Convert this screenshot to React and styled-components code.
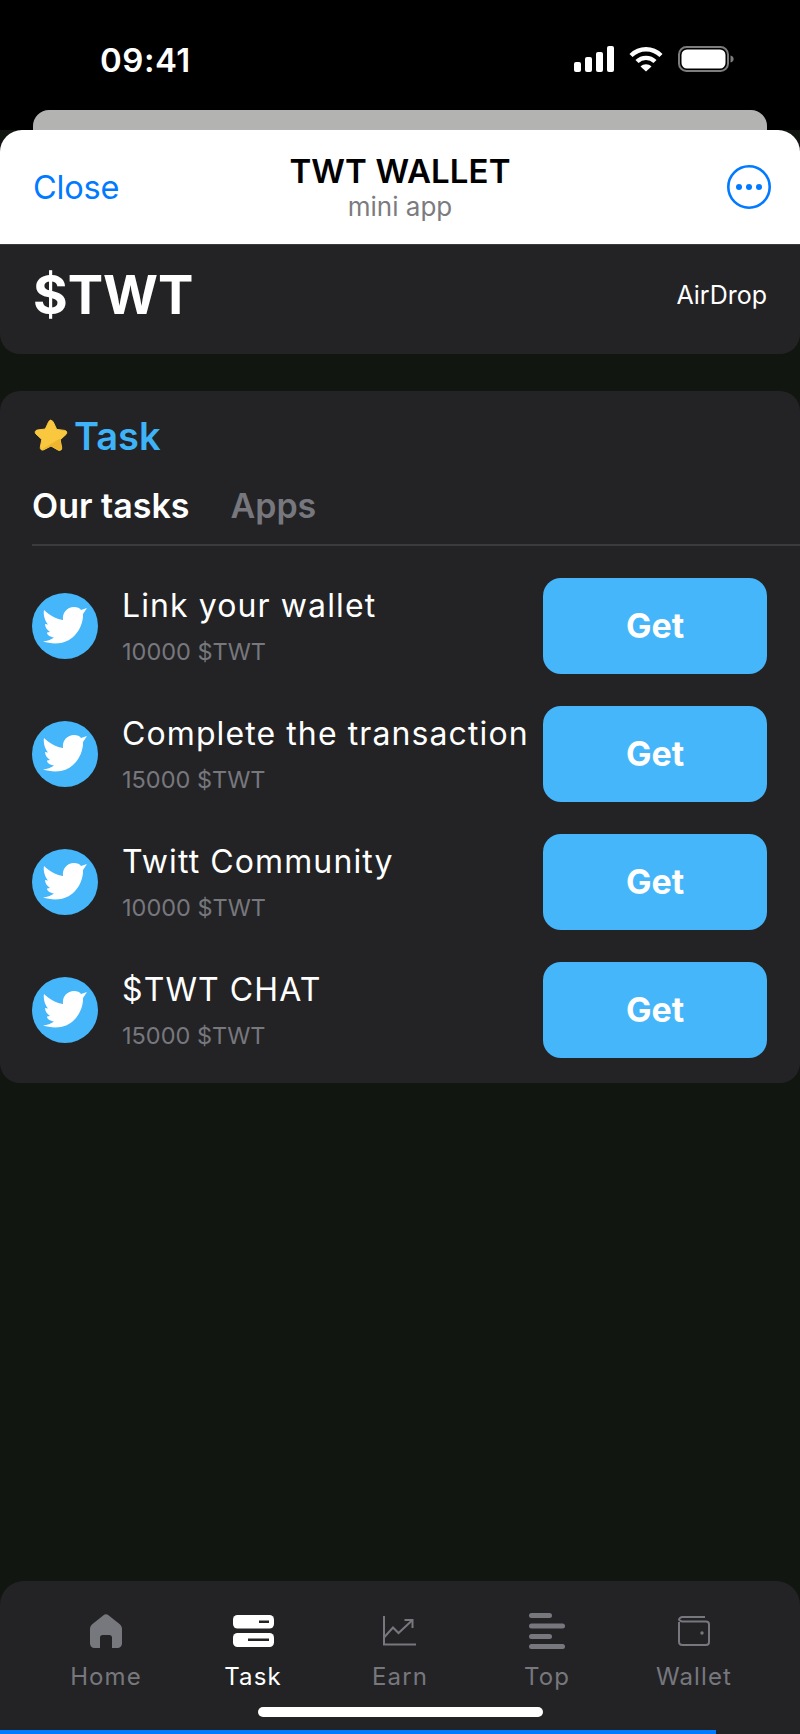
import React from "react";
import styled, { createGlobalStyle } from "styled-components";

const GlobalStyle = createGlobalStyle`
  html, body {
    margin: 0;
    padding: 0;
    background: #000;
  }
  * {
    box-sizing: border-box;
  }
`;

const Page = styled.div`
  width: 800px;
  height: 1734px;
  display: flex;
  flex-direction: column;
  background: #111611;
  font-family: Inter, "Liberation Sans", sans-serif;
  overflow: hidden;
`;

const StatusBar = styled.div`
  height: 110px;
  background: #000;
  color: #fff;
  display: flex;
  justify-content: space-between;
  align-items: flex-start;
  padding: 41px 66px 0 100px;
`;

const Clock = styled.span`
  font-size: 33px;
  line-height: 38px;
  font-weight: 600;
  letter-spacing: 0.5px;
`;

const StatusIcons = styled.div`
  display: flex;
  align-items: center;
  gap: 15px;
  padding-top: 5px;
`;

const SheetTop = styled.div`
  background: #000;
  padding: 0 33px;
  height: 20px;
`;

const SheetBehind = styled.div`
  height: 100%;
  background: #b3b3b1;
  border-radius: 16px 16px 0 0;
`;

const MiniBar = styled.header`
  height: 114px;
  background: #fff;
  border-radius: 22px 22px 0 0;
  display: grid;
  grid-template-columns: 1fr auto 1fr;
  align-items: center;
  padding: 0 29px;
`;

const CloseLink = styled.span`
  color: #007aff;
  font-size: 32.5px;
  letter-spacing: -0.2px;
  margin-left: 4px;
`;

const MiniTitle = styled.div`
  text-align: center;
`;

const AppName = styled.div`
  color: #000;
  font-size: 33px;
  line-height: 39px;
  font-weight: 600;
  letter-spacing: 0.1px;
`;

const AppKind = styled.div`
  color: #7c7c80;
  font-size: 26px;
  line-height: 30px;
  margin-top: 1px;
`;

const MoreButton = styled.div`
  justify-self: end;
  display: flex;
`;

const Hero = styled.section`
  height: 110px;
  background: #232325;
  border-radius: 0 0 20px 20px;
  border-top: 1px solid #3a3a3c;
  display: flex;
  justify-content: space-between;
  align-items: center;
  padding: 0 33px 10px;
  color: #fff;
`;

const Ticker = styled.h1`
  margin: 0;
  font-size: 53px;
  line-height: 64px;
  font-weight: 700;
`;

const HeroLink = styled.span`
  font-size: 25px;
`;

const TaskCard = styled.section`
  margin-top: 37px;
  height: 692px;
  background: #232325;
  border-radius: 20px;
  padding: 23px 0 0 32px;
`;

const TaskHeading = styled.div`
  display: flex;
  align-items: center;
  gap: 6px;
  height: 44px;
  color: #3fb3f8;
  font-size: 38px;
  font-weight: 600;
  padding-left: 2px;
`;

const Tabs = styled.div`
  display: flex;
  gap: 41px;
  margin-top: 26px;
  padding-bottom: 16px;
  border-bottom: 2px solid #3b3b3e;
`;

const Tab = styled.span`
  font-size: 34px;
  line-height: 44px;
  font-weight: 600;
  color: ${(p) => (p.$active ? "#fff" : "#77777e")};
`;

const TaskList = styled.div`
  display: flex;
  flex-direction: column;
  gap: 32px;
  margin-top: 32px;
  padding-right: 33px;
`;

const TaskRow = styled.div`
  display: flex;
  align-items: center;
  height: 96px;
`;

const TwitterBadge = styled.div`
  width: 66px;
  height: 66px;
  flex: none;
  border-radius: 50%;
  background: #45b6f9;
  display: flex;
`;

const TaskText = styled.div`
  flex: 1;
  min-width: 0;
  margin-left: 24px;
`;

const TaskName = styled.div`
  color: #fff;
  font-size: 32px;
  line-height: 44px;
  white-space: nowrap;
  letter-spacing: 1.1px;
`;

const TaskReward = styled.div`
  color: #77777e;
  font-size: 23.5px;
  line-height: 32px;
  margin-top: 8px;
`;

const GetButton = styled.button`
  width: 224px;
  height: 96px;
  flex: none;
  border: 0;
  border-radius: 18px;
  background: #45b6f9;
  color: #fff;
  font-family: inherit;
  font-size: 34px;
  font-weight: 700;
  padding: 0 0 2px;
`;

const TabBar = styled.nav`
  position: relative;
  margin-top: auto;
  height: 153px;
  background: #232325;
  border-radius: 24px 24px 0 0;
  display: grid;
  grid-template-columns: repeat(5, 147px);
  justify-content: center;
  padding-top: 30px;
`;

const TabItem = styled.div`
  display: flex;
  flex-direction: column;
  align-items: center;
  color: ${(p) => (p.$active ? "#fff" : "#77777e")};
`;

const TabIcon = styled.div`
  height: 40px;
  display: flex;
  align-items: center;
  justify-content: center;
`;

const TabLabel = styled.span`
  margin-top: 10px;
  font-size: 24px;
  line-height: 32px;
  letter-spacing: 1.1px;
`;

const HomeIndicator = styled.div`
  position: absolute;
  left: 258px;
  bottom: 17px;
  width: 285px;
  height: 10px;
  border-radius: 5px;
  background: #fff;
`;

const ProgressLine = styled.div`
  position: absolute;
  left: 0;
  bottom: 0;
  width: 716px;
  height: 4px;
  background: #007aff;
`;

const SignalIcon = () => (
  <svg width="40" height="26" viewBox="0 0 40 26" fill="#fff">
    <rect x="0" y="16" width="7" height="10" rx="2" />
    <rect x="11" y="11" width="7" height="15" rx="2" />
    <rect x="22" y="6" width="7" height="20" rx="2" />
    <rect x="33" y="0" width="7" height="26" rx="2" />
  </svg>
);

const WifiIcon = () => (
  <svg width="34" height="26" viewBox="0 0 34 26" fill="none" stroke="#fff" strokeWidth="4.4">
    <path d="M2 9.5C10.5 1.2 23.5 1.2 32 9.5" />
    <path d="M8 15.5C13 10.6 21 10.6 26 15.5" />
    <path d="M17 25.5L11.5 20.4C14.6 17.6 19.4 17.6 22.5 20.4Z" fill="#fff" stroke="none" />
  </svg>
);

const BatteryIcon = () => (
  <svg width="56" height="26" viewBox="0 0 56 26" fill="none">
    <rect x="1" y="1" width="49" height="24" rx="7.5" stroke="#7d7d7d" strokeWidth="2" />
    <rect x="3.5" y="3.5" width="44" height="19" rx="5.5" fill="#fff" />
    <path d="M52.5 9.5C54.6 10 55.6 11.3 55.6 13S54.6 16 52.5 16.5Z" fill="#7d7d7d" />
  </svg>
);

const MoreIcon = () => (
  <svg width="44" height="44" viewBox="0 0 44 44" fill="#007aff">
    <circle cx="22" cy="22" r="20.7" fill="none" stroke="#007aff" strokeWidth="2.6" />
    <circle cx="12" cy="22" r="3" />
    <circle cx="22" cy="22" r="3" />
    <circle cx="32" cy="22" r="3" />
  </svg>
);

const StarIcon = () => (
  <svg width="34" height="34" viewBox="0 0 34 34">
    <path
      d="M17 1.5c1 0 1.8.6 2.3 1.6l3.4 7.3 8 1c2 .3 2.8 2.6 1.3 4l-5.8 5.4 1.5 7.9c.4 2-1.7 3.5-3.4 2.5L17 27l-7.3 3.8c-1.7 1-3.8-.5-3.4-2.5l1.5-7.9L2 15c-1.5-1.4-.7-3.7 1.3-4l8-1 3.4-7.3c.5-1 1.3-1.6 2.3-1.6z"
      fill="#f9c83f"
      stroke="#f9c83f"
      strokeLinejoin="round"
    />
    <path d="M9 29.8L26 19.5l1.5 8.8c.4 2-1.7 3.500-3.4 2.5L17 27l-7.3 3.8z" fill="#eeb52f" />
  </svg>
);

// bird with the head raised and an open beak, sits inside the round badge
const BirdIcon = () => (
  <svg width="66" height="66" viewBox="0 0 66 66" fill="#fff">
    <path d="M12 17C17 22 24 26 31 27C30 20 35 14 42 14C45 14 48 15 49 17L55 15L51 21C51.5 32 44 47 29 50C22 51 16 50 11 48.5C15 48 19 47 22 44.5C18 44 15 42 15 39.5L18 39C15 37 13 34 13 31L16 31.5C13 28 11 22 12 17Z" />
  </svg>
);

const HomeIcon = () => (
  <svg width="32" height="34" viewBox="0 0 32 34" fill="currentColor">
    <path d="M13.5 1.2c1.5-1.2 3.5-1.2 5 0l11 8.800c1.5 1.200 2.500 3 2.500 5v14.500c0 2.500-2 4.500-4.500 4.500H22V23.500c0-1.400-1.100-2.500-2.500-2.500h-7c-1.400 0-2.500 1.100-2.500 2.500V34H4.500C2 34 0 32 0 29.500V15c0-2 1-3.800 2.500-5z" />
  </svg>
);

const TaskIcon = () => (
  <svg width="41" height="32" viewBox="0 0 41 32">
    <rect width="41" height="13.5" rx="4.5" fill="currentColor" />
    <rect y="18" width="41" height="14" rx="4.5" fill="currentColor" />
    <rect x="26" y="5.5" width="10" height="2.5" fill="#232325" />
    <rect x="15" y="23.5" width="21" height="2.5" fill="#232325" />
  </svg>
);

const EarnIcon = () => (
  <svg width="34" height="30" viewBox="0 0 34 30" fill="none" stroke="currentColor" strokeWidth="2">
    <path d="M1 0V28.5H33" />
    <path d="M1 21.5L10 11.5L15.5 17L29 4.5" />
    <path d="M21.5 4H29.5V12" />
  </svg>
);

const TopIcon = () => (
  <svg width="36" height="36" viewBox="0 0 36 36" fill="currentColor">
    <rect width="23" height="5" rx="2.5" />
    <rect y="10.5" width="36" height="5" rx="2.5" />
    <rect y="21" width="23" height="5" rx="2.5" />
    <rect y="31" width="36" height="5" rx="2.5" />
  </svg>
);

const WalletIcon = () => (
  <svg width="32" height="30" viewBox="0 0 32 30" fill="none" stroke="currentColor" strokeWidth="2">
    <path d="M1 6V25.5C1 27.5 2.5 29 4.5 29H28C29.7 29 31 27.7 31 26V8.5C31 6.8 29.7 5.5 28 5.5H4.5C2.5 5.5 1 4 1 3.5S2.5 1 4.5 1H27" />
    <circle cx="24" cy="17" r="1.7" fill="currentColor" stroke="none" />
  </svg>
);

const tasks = [
  { name: "Link your wallet", reward: "10000 $TWT" },
  { name: "Complete the transaction", reward: "15000 $TWT" },
  { name: "Twitt Community", reward: "10000 $TWT" },
  { name: "$TWT CHAT", reward: "15000 $TWT" },
];

const tabs = [
  { label: "Home", icon: <HomeIcon /> },
  { label: "Task", icon: <TaskIcon />, active: true },
  { label: "Earn", icon: <EarnIcon /> },
  { label: "Top", icon: <TopIcon /> },
  { label: "Wallet", icon: <WalletIcon /> },
];

export default function App() {
  return (
    <>
      <GlobalStyle />
      <Page>
        <StatusBar>
          <Clock>09:41</Clock>
          <StatusIcons>
            <SignalIcon />
            <WifiIcon />
            <BatteryIcon />
          </StatusIcons>
        </StatusBar>
        <SheetTop>
          <SheetBehind />
        </SheetTop>
        <MiniBar>
          <CloseLink>Close</CloseLink>
          <MiniTitle>
            <AppName>TWT WALLET</AppName>
            <AppKind>mini app</AppKind>
          </MiniTitle>
          <MoreButton>
            <MoreIcon />
          </MoreButton>
        </MiniBar>
        <Hero>
          <Ticker>$TWT</Ticker>
          <HeroLink>AirDrop</HeroLink>
        </Hero>
        <TaskCard>
          <TaskHeading>
            <StarIcon />
            Task
          </TaskHeading>
          <Tabs>
            <Tab $active>Our tasks</Tab>
            <Tab>Apps</Tab>
          </Tabs>
          <TaskList>
            {tasks.map((task) => (
              <TaskRow key={task.name}>
                <TwitterBadge>
                  <BirdIcon />
                </TwitterBadge>
                <TaskText>
                  <TaskName>{task.name}</TaskName>
                  <TaskReward>{task.reward}</TaskReward>
                </TaskText>
                <GetButton>Get</GetButton>
              </TaskRow>
            ))}
          </TaskList>
        </TaskCard>
        <TabBar>
          {tabs.map((tab) => (
            <TabItem key={tab.label} $active={tab.active}>
              <TabIcon>{tab.icon}</TabIcon>
              <TabLabel>{tab.label}</TabLabel>
            </TabItem>
          ))}
          <HomeIndicator />
          <ProgressLine />
        </TabBar>
      </Page>
    </>
  );
}
